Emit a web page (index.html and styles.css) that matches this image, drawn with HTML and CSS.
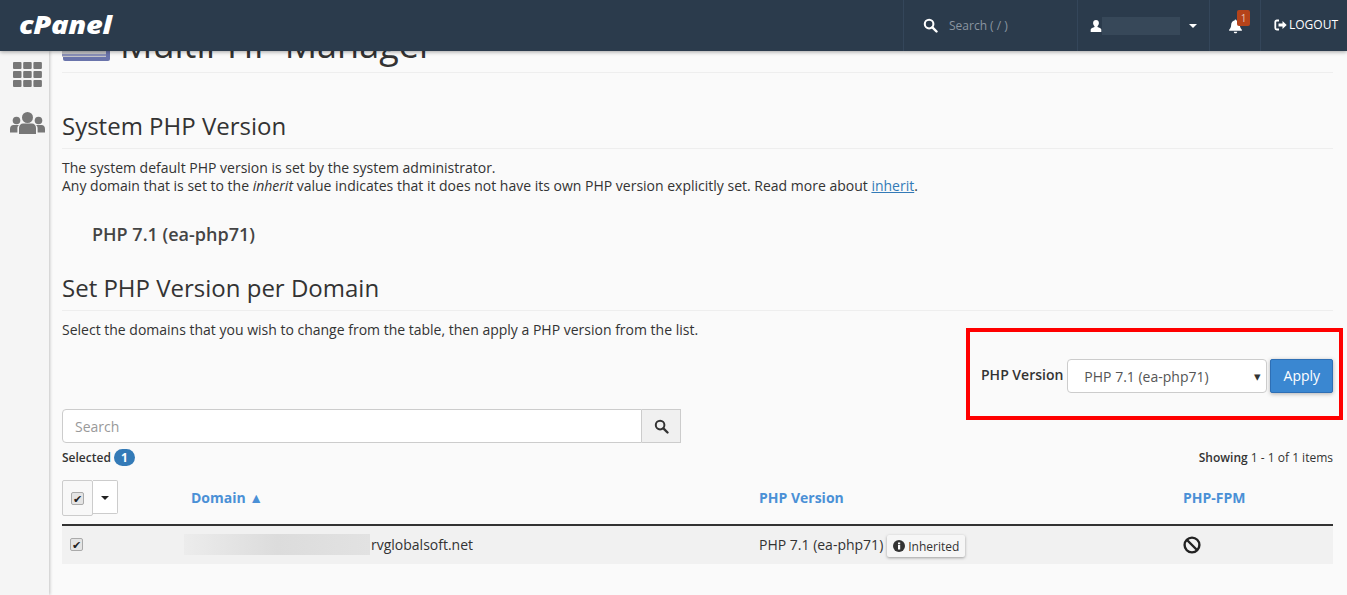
FILE: index.html
```html
<!DOCTYPE html>
<html lang="en">
<head>
<meta charset="utf-8">
<title>MultiPHP Manager</title>
<link rel="stylesheet" href="styles.css">
</head>
<body>
<div class="app">
  <header class="topbar">
    <div class="logo"><span class="logo-text">cPanel</span></div>
    <div class="top-search">
      <svg class="ic-search" viewBox="0 0 16 16"><circle cx="6.5" cy="6.5" r="4.6" fill="none" stroke="#fff" stroke-width="2.2"/><path d="M10 10l4.4 4.4" stroke="#fff" stroke-width="2.6" stroke-linecap="round"/></svg>
      <span>Search ( / )</span>
    </div>
    <div class="top-user">
      <svg class="ic-user" viewBox="0 0 12 12"><path d="M6 0c1.8 0 2.9 1.300 2.900 3.100 0 1.300-.6 2.500-1.400 3.100v.9c1.500.5 3.800 1.200 3.800 2.500V12H.7V9.600c0-1.300 2.300-2 3.800-2.500v-.9c-.8-.6-1.400-1.800-1.400-3.100C3.100 1.300 4.200 0 6 0z" fill="#fff"/></svg>
      <span class="blur-name"></span>
      <span class="caret"></span>
    </div>
    <div class="top-bell">
      <svg class="ic-bell" viewBox="0 0 16 16"><path d="M8 1c.6 0 1 .4 1 1 2.300.4 3.600 2.100 3.600 4.500 0 3.500 1.400 4.500 2.200 5.500v1H1.200v-1c.8-1 2.200-2 2.200-5.500C3.400 4.100 4.700 2.400 7 2c0-.6.4-1 1-1zM6.200 14h3.600c0 1-.8 1.800-1.800 1.800S6.200 15 6.200 14z" fill="#fff"/></svg>
      <span class="bell-badge">1</span>
    </div>
    <div class="top-logout">
      <svg class="ic-logout" viewBox="0 0 13 12"><path d="M5 1.500H2.800A1.500 1.500 0 0 0 1.300 3v6a1.500 1.500 0 0 0 1.500 1.500H5" fill="none" stroke="#fff" stroke-width="1.800"/><path d="M4.500 4.500h4V2l4.200 4-4.200 4V7.500h-4z" fill="#fff"/></svg>
      <span>LOGOUT</span>
    </div>
  </header>
  <div class="shell">
    <aside class="sidebar">
      <svg class="ic-grid" viewBox="0 0 29 25"><g fill="#777"><rect x="0" y="0" width="8.500" height="7" rx="1"/><rect x="10.200" y="0" width="8.500" height="7" rx="1"/><rect x="20.400" y="0" width="8.500" height="7" rx="1"/><rect x="0" y="9" width="8.500" height="7" rx="1"/><rect x="10.200" y="9" width="8.500" height="7" rx="1"/><rect x="20.400" y="9" width="8.500" height="7" rx="1"/><rect x="0" y="18" width="8.500" height="7" rx="1"/><rect x="10.200" y="18" width="8.500" height="7" rx="1"/><rect x="20.400" y="18" width="8.500" height="7" rx="1"/></g></svg>
      <svg class="ic-users" viewBox="0 0 35 22"><g fill="#777"><circle cx="17.500" cy="5.500" r="5.500"/><circle cx="6.500" cy="8.500" r="3.800"/><circle cx="28.500" cy="8.500" r="3.800"/><path d="M9 22v-6c0-3 2-4.500 4-4.500h9c2 0 4 1.500 4 4.500v6q-8.500 1-17 0z"/><path d="M0 20.500v-3.500c0-2.500 1.500-4 3.500-4H9c-1.200 1-1.600 2-1.600 3.500v4z"/><path d="M35 20.500v-3.500c0-2.500-1.500-4-3.500-4H26c1.200 1 1.600 2 1.600 3.500v4z"/></g></svg>
    </aside>
    <main class="content">
      <div class="page-title">
        <svg class="ic-title" viewBox="0 0 48 20"><rect x="1" y="0" width="47" height="20" rx="2" fill="#6a74ab"/><rect x="0" y="0" width="44" height="16" fill="#c4c4c8"/><rect x="0" y="13" width="44" height="2" fill="#8a90b8"/></svg>
        <h1>MultiPHP Manager</h1>
      </div>

      <h2 class="section-first">System PHP Version</h2>
      <p class="text">The system default PHP version is set by the system administrator.<br>Any domain that is set to the <em>inherit</em> value indicates that it does not have its own PHP version explicitly set. Read more about <a href="#">inherit</a>.</p>
      <div class="sys-version">PHP 7.1 (ea-php71)</div>

      <h2>Set PHP Version per Domain</h2>
      <div class="intro-row">
        <p class="text">Select the domains that you wish to change from the table, then apply a PHP version from the list.</p>
        <div class="apply-box">
          <label class="apply-label">PHP Version</label>
          <div class="select">PHP 7.1 (ea-php71)<span class="sel-arrow">▾</span></div>
          <button class="btn-apply">Apply</button>
        </div>
      </div>

      <div class="search-group">
        <div class="search-input">Search</div>
        <div class="search-btn"><svg viewBox="0 0 16 16"><circle cx="6.500" cy="6.500" r="4.600" fill="none" stroke="#333" stroke-width="2.100"/><path d="M10 10l4.400 4.400" stroke="#333" stroke-width="2.500" stroke-linecap="round"/></svg></div>
      </div>

      <div class="status-row">
        <div class="selected">Selected <span class="badge">1</span></div>
        <div class="showing"><strong>Showing</strong> 1 - 1 of 1 items</div>
      </div>

      <div class="table">
        <div class="thead">
          <div class="col-check">
            <span class="chk-btn"><span class="chk chk-head">✔</span></span><span class="drop-btn"><span class="caret dark"></span></span>
          </div>
          <div class="col-domain th">Domain ▲</div>
          <div class="col-version th">PHP Version</div>
          <div class="col-fpm th">PHP-FPM</div>
        </div>
        <div class="trow">
          <div class="col-check"><span class="chk chk-row">✔</span></div>
          <div class="col-domain domain-cell"><span class="blur-domain"></span>rvglobalsoft.net</div>
          <div class="col-version version-cell"><span>PHP 7.1 (ea-php71)</span><span class="inherited"><svg viewBox="0 0 12 12"><circle cx="6" cy="6" r="6" fill="#333"/><rect x="5" y="5" width="2.200" height="4.500" fill="#fff"/><rect x="5" y="2.500" width="2.200" height="1.800" fill="#fff"/></svg>Inherited</span></div>
          <div class="col-fpm"><svg class="ic-ban" viewBox="0 0 18 18"><circle cx="9" cy="9" r="7.400" fill="none" stroke="#222" stroke-width="2.400"/><path d="M4 4l10 10" stroke="#222" stroke-width="2.400"/></svg></div>
        </div>
      </div>
    </main>
  </div>
</div>
</body>
</html>
```
FILE: styles.css
```css
* { box-sizing: border-box; }
html, body { margin: 0; height: 100%; overflow: hidden; }
body { font-family: "Open Sans", sans-serif; font-size: 14px; color: #333; background: #fafafa; }
.app { display: flex; flex-direction: column; height: 595px; }

.topbar { position: relative; z-index: 2; display: flex; align-items: stretch; flex: 0 0 51px; height: 51px; background: #2b3b4c; color: #fff; box-shadow: 0 1px 4px rgba(0,0,0,.35); }
.logo { flex: 1; padding: 6px 0 0 19px; font-size: 25px; line-height: 36px; font-weight: 800; font-style: italic; color: #fff; }
.logo-text { display: inline-block; letter-spacing: -.3px; transform: scaleX(1.16); transform-origin: left center; }
.top-search { display: flex; align-items: center; width: 174px; padding: 0 0 0 19px; border-left: 1px solid #34465a; font-size: 12px; color: #8a95a0; }
.ic-search { width: 15px; height: 15px; margin-right: 11px; }
.top-user { display: flex; align-items: center; width: 132px; padding-left: 12px; border-left: 1px solid #34465a; }
.ic-user { width: 12px; height: 12px; }
.blur-name { width: 78px; height: 18px; background: #374859; }
.caret { display: inline-block; width: 0; height: 0; margin-left: 9px; border-left: 4px solid transparent; border-right: 4px solid transparent; border-top: 4px solid #fff; }
.caret.dark { margin: 0; border-top-color: #222; }
.top-bell { position: relative; display: flex; align-items: center; width: 51px; padding-left: 18px; border-left: 1px solid #34465a; }
.ic-bell { width: 15px; height: 16px; }
.bell-badge { position: absolute; top: 10px; left: 27px; width: 13px; height: 16px; border-radius: 2px; background: #b5431a; font-size: 10px; line-height: 16px; text-align: center; color: #e8c8b8; }
.top-logout { display: flex; align-items: center; width: 87px; padding: 0 0 2px 13px; border-left: 1px solid #34465a; font-size: 12px; }
.ic-logout { width: 13px; height: 12px; margin-right: 2px; }

.shell { display: flex; flex: 1; min-height: 0; }
.sidebar { display: flex; flex-direction: column; align-items: center; flex: 0 0 49px; padding: 11px 0 0 6px; background: #f5f5f5; box-shadow: 1px 0 3px rgba(0,0,0,.22); }
.ic-grid { width: 29px; height: 25px; margin-bottom: 25px; }
.ic-users { width: 35px; height: 22px; }

.content { flex: 1; min-width: 0; padding: 0 14px 0 13px; overflow: hidden; }
.page-title { display: flex; align-items: flex-end; gap: 10px; margin-top: -31px; padding-bottom: 3px; border-bottom: 1px solid #eee; box-sizing: content-box; height: 49px; }
.ic-title { width: 48px; height: 20px; flex: none; margin-bottom: 8px; }
h1 { margin: 0; font-size: 36px; line-height: 49px; font-weight: 400; white-space: nowrap; }
h2 { margin: 0; padding-bottom: 6px; font-size: 24px; line-height: 33px; font-weight: 400; border-bottom: 1px solid #eee; }
.section-first { margin-top: 36px; }
.text { margin: 10px 0 0; line-height: 18px; font-size: 14px; }
.text a { color: #337ab7; }
.sys-version { margin: 27px 0 0 30px; font-size: 18px; line-height: 24px; font-weight: 600; color: #444; }
.sys-version + h2 { margin-top: 25px; }

.intro-row { display: flex; justify-content: space-between; align-items: flex-start; margin-right: -10px; padding-top: 1px; }
.intro-row .text { margin-top: 9px; }
.apply-box { display: flex; align-items: center; width: 377px; height: 92px; margin-top: 16px; padding: 4px 6px 0 11px; border: 4px solid #f00; }
.apply-label { flex: none; margin: 0 4px 3px 0; font-size: 14px; font-weight: 600; white-space: nowrap; }
.select { position: relative; flex: none; width: 200px; height: 34px; padding: 0 16px; border: 1px solid #ccc; border-radius: 4px; background: #fff; line-height: 34px; color: #555; }
.sel-arrow { position: absolute; right: 5px; top: -1px; font-size: 13px; color: #333; }
.btn-apply { flex: none; width: 63px; height: 34px; margin-left: 3px; padding: 0 0 2px; border: 1px solid #2e6fb5; border-radius: 2px; background: #3a87d1; color: #fff; font: 14px "Open Sans", sans-serif; box-shadow: 0 1px 4px rgba(0,0,0,.3); }

.search-group { display: flex; width: 619px; height: 34px; margin-top: -11px; }
.search-input { flex: 1; padding-left: 12px; border: 1px solid #ccc; border-radius: 4px 0 0 4px; background: #fff; line-height: 33px; color: #999; }
.search-btn { display: flex; align-items: center; justify-content: center; width: 39px; border: 1px solid #ccc; border-left: 0; background: #f0f0f0; }
.search-btn svg { width: 15px; height: 15px; }

.status-row { display: flex; justify-content: space-between; align-items: center; height: 18px; margin-top: 5px; font-size: 12px; }
.selected { font-weight: 600; color: #333; }
.badge { display: inline-block; width: 21px; height: 17px; border-radius: 9px; background: #337ab7; color: #fff; font-size: 12px; font-weight: 700; line-height: 17px; text-align: center; }
.showing strong { font-weight: 600; }

.table { margin-top: 10px; }
.thead, .trow { display: flex; align-items: center; }
.thead { height: 50px; border-bottom: 2px solid #333; padding-bottom: 6px; }
.trow { height: 38px; padding-bottom: 2px; background: #f1f1f1; }
.col-check { display: flex; width: 122px; flex: none; }
.thead .col-check { align-self: flex-start; margin-top: 4px; align-items: flex-start; }
.col-domain { width: 575px; flex: none; padding-left: 7px; }
.col-version { width: 424px; flex: none; }
.col-fpm { flex: 1; }
.th { font-weight: 700; color: #4a90d6; font-size: 14px; }
.chk-btn { display: flex; align-items: center; justify-content: center; width: 31px; height: 36px; border: 1px solid #ccc; border-radius: 2px; background: #f8f8f8; }
.drop-btn { display: flex; align-items: center; justify-content: center; width: 25px; height: 34px; padding-top: 2px; border: 1px solid #ccc; border-left: 0; border-radius: 0 2px 2px 0; background: #fff; }
.chk { display: flex; align-items: center; justify-content: center; width: 13px; height: 13px; border: 1px solid #aaa; border-radius: 2px; background: #e4e4e4; font-size: 11px; line-height: 1; color: #222; }
.chk-row { margin-left: 8px; }
.domain-cell { display: flex; align-items: center; padding-left: 0; font-size: 14px; }
.blur-domain { width: 186px; height: 21px; margin-right: 1px; background: linear-gradient(90deg, #ececec, #dcdcdc 50%, #e2e2e2); }
.version-cell { display: flex; align-items: center; white-space: nowrap; }
.inherited { display: inline-flex; align-items: center; height: 22px; margin: 4px 0 0 4px; padding: 0 6px; border-radius: 2px; background: #f6f6f6; box-shadow: 0 1px 3px rgba(0,0,0,.35); font-size: 12px; color: #333; }
.inherited svg { width: 12px; height: 12px; margin-right: 3px; }
.ic-ban { display: block; width: 18px; height: 18px; margin-top: 2px; }
```
